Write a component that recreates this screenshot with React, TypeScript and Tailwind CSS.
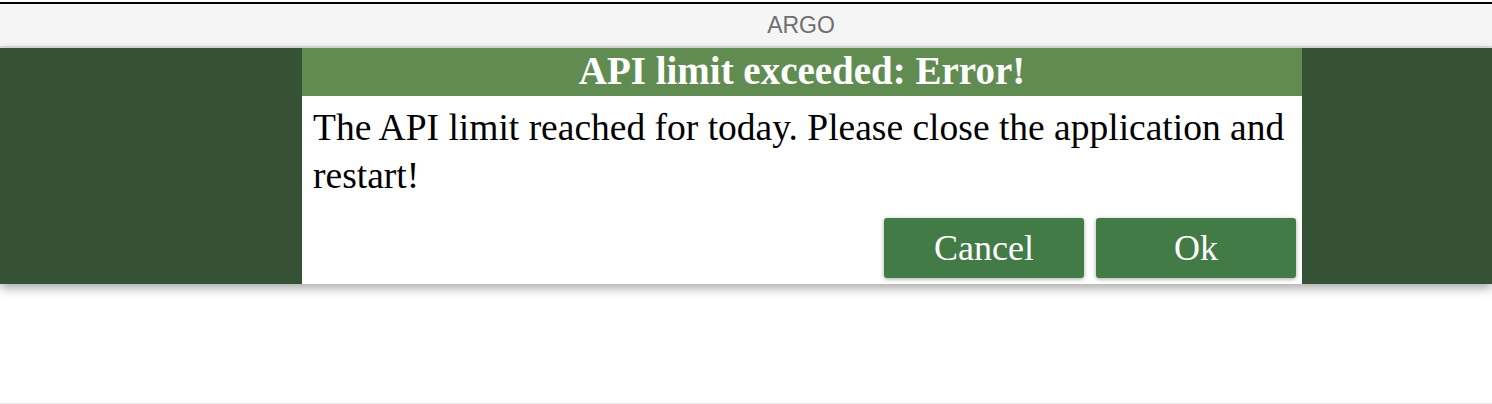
export default function App() {
  return (
    <div className="w-[1492px] h-[404px] bg-white flex flex-col border-b border-[#e6e6e6] overflow-hidden">
      {/* window chrome */}
      <div className="h-[2px] bg-white" />
      <div className="h-[2px] bg-black" />
      <div className="h-[44px] bg-[#f5f5f5] border-b-2 border-[#dedede] flex items-center justify-center pl-[110px]">
        <span className="text-[23px] text-[#6f6f6f] font-['Liberation_Sans',Arial,sans-serif] leading-none">ARGO</span>
      </div>

      {/* backdrop band with dialog */}
      <div className="relative z-10 h-[236px] bg-[#355236] pl-[302px] shadow-[0_4px_10px_rgba(0,0,0,0.35)] font-['Liberation_Serif','Times_New_Roman',serif]">
        <div className="w-[1000px] h-full bg-white flex flex-col">
          <div className="h-[48px] bg-[#618c51] text-white font-bold text-[39px] leading-[46px] text-center">
            API limit exceeded: Error!
          </div>
          <p className="px-[11px] pt-[8px] text-[37.5px] leading-[48px] text-black">
            The API limit reached for today. Please close the application and restart!
          </p>
          <div className="mt-auto flex justify-end gap-[12px] pr-[6px] pb-[6px]">
            <button className="w-[200px] h-[60px] rounded-[3px] bg-[#427b45] text-white text-[36px] leading-[60px] shadow-[0_1px_4px_rgba(0,0,0,0.35)]">
              Cancel
            </button>
            <button className="w-[200px] h-[60px] rounded-[3px] bg-[#427b45] text-white text-[36px] leading-[60px] shadow-[0_1px_4px_rgba(0,0,0,0.35)]">
              Ok
            </button>
          </div>
        </div>
      </div>

      <div className="flex-1 bg-white" />
    </div>
  );
}
